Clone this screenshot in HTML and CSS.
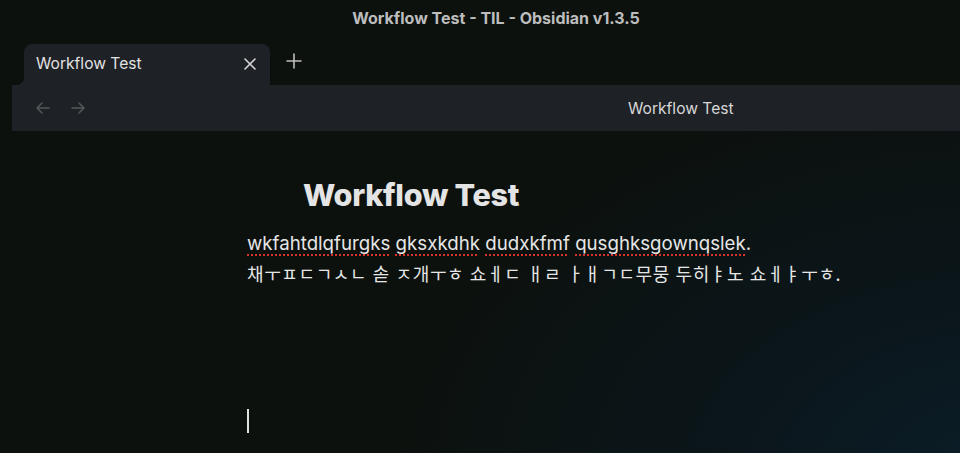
FILE: index.html
```html
<!DOCTYPE html>
<html lang="ko">
<head>
<meta charset="utf-8">
<link rel="stylesheet" href="styles.css">
</head>
<body>
<div class="app">
  <div class="titlebar">Workflow Test - TIL - Obsidian v1.3.5</div>
  <div class="tabbar">
    <div class="tab">
      <span class="tab-title">Workflow Test</span>
      <svg class="tab-close" width="14" height="14" viewBox="0 0 14 14"><path d="M2 2L12 12M12 2L2 12" stroke="#d6d6d6" stroke-width="1.6" stroke-linecap="round"/></svg>
    </div>
    <svg class="new-tab" width="16" height="16" viewBox="0 0 16 16"><path d="M8 1V15M1 8H15" stroke="#bdbdbd" stroke-width="1.6" stroke-linecap="round"/></svg>
  </div>
  <div class="header">
    <div class="nav">
      <svg width="16" height="16" viewBox="0 0 16 16"><path d="M14 8H2M7 3L2 8L7 13" fill="none" stroke="#55585b" stroke-width="1.5" stroke-linecap="round" stroke-linejoin="round"/></svg>
      <svg width="16" height="16" viewBox="0 0 16 16"><path d="M2 8H14M9 3L14 8L9 13" fill="none" stroke="#55585b" stroke-width="1.5" stroke-linecap="round" stroke-linejoin="round"/></svg>
    </div>
    <div class="header-title">Workflow Test</div>
  </div>
  <div class="content">
    <h1 class="inline-title">Workflow Test</h1>
    <p class="line"><span class="typo">wkfahtdlqfurgks</span> <span class="typo">gksxkdhk</span> <span class="typo">dudxkfmf</span> <span class="typo">qusghksgownqslek</span>.</p>
    <p class="line ko">채ㅜㅍㄷㄱㅅㄴ 솓 ㅈ개ㅜㅎ 쇼ㅔㄷ ㅐㄹ ㅏㅐㄱㄷ무뭉 두히ㅑ노 쇼ㅔㅑㅜㅎ.</p>
    <div class="caret"></div>
  </div>
</div>
</body>
</html>
```
FILE: styles.css
```css
html, body {
  margin: 0;
  height: 100%;
}
body {
  background: radial-gradient(ellipse 600px 400px at 1000px 480px, #0b1e29 0%, #0b161b 45%, rgba(12,17,14,0) 100%), #0c110e;
  font-family: Inter, "Noto Sans", sans-serif;
  color: #dcdcdc;
  overflow: hidden;
}
.app {
  display: flex;
  flex-direction: column;
  height: 453px;
}
.titlebar {
  height: 36px;
  display: flex;
  align-items: center;
  justify-content: center;
  padding-left: 32px;
  font-weight: 700;
  font-size: 16px;
  color: #bdbdbd;
}
.tabbar {
  height: 49px;
  display: flex;
  align-items: flex-end;
  padding-left: 24px;
  box-sizing: border-box;
}
.tab {
  position: relative;
  width: 246px;
  height: 41px;
  background: #1e2125;
  border-radius: 8px 8px 0 0;
  display: flex;
  align-items: center;
  justify-content: space-between;
  padding: 0 13px 2px 12px;
  box-sizing: border-box;
}
.tab::before {
  content: "";
  position: absolute;
  left: -8px;
  bottom: 0;
  width: 8px;
  height: 8px;
  background: radial-gradient(circle at 0 0, transparent 8px, #1e2125 8.5px);
}
.tab-title {
  font-size: 15.6px;
  color: #e2e2e2;
}
.tab-close {
  display: block;
}
.new-tab {
  display: block;
  margin: 0 0 16px 16px;
}
.header {
  margin-left: 12px;
  height: 46px;
  background: #1e2125;
  display: flex;
  align-items: center;
}
.nav {
  display: flex;
  gap: 19px;
  padding-left: 23px;
  width: 220px;
}
.nav svg {
  display: block;
}
.header-title {
  margin-left: 373px;
  font-size: 15.6px;
  color: #d8d8d8;
}
.content {
  padding-left: 247px;
  padding-top: 44px;
}
.inline-title {
  margin: 0 0 0 56px;
  font-size: 30.6px;
  font-weight: 800;
  color: #e4e4e4;
  line-height: 40px;
  letter-spacing: -0.3px;
}
.line {
  margin: 0;
  font-size: 18.7px;
  line-height: 30px;
  color: #e6e6e6;
}
.line:first-of-type {
  margin-top: 14px;
}
.ko {
  font-family: "Noto Sans CJK KR", sans-serif;
  font-size: 18px;
  letter-spacing: 0.6px;
  line-height: 28px;
}
.typo {
  text-decoration: underline dotted #d8322d;
  text-decoration-thickness: 2px;
  text-underline-offset: 4px;
}
.caret {
  width: 2px;
  height: 24px;
  background: #e0e0e0;
  margin-top: 122px;
}
```
